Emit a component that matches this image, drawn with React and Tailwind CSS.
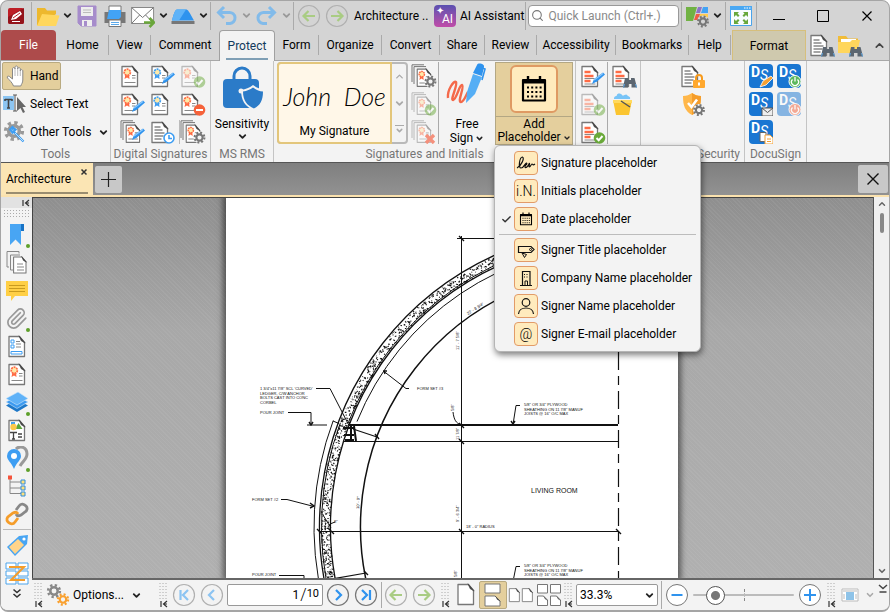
import React, { useState } from 'react';
import { Check, ChevronDown, ChevronUp, Paperclip, Search } from 'lucide-react';

const Svg = ({ w = 24, h = 24, children }) => (
  <svg width={w} height={h} viewBox={`0 0 ${w} ${h}`} fill="none" className="shrink-0">
    {children}
  </svg>
);

const Caret = ({ color = '#222', size = 11 }) => (
  <ChevronDown size={size} color={color} strokeWidth={4} className="shrink-0" />
);

const Gear = ({ x, y, r = 5, color = '#777' }) => (
  <g transform={`translate(${x} ${y})`} fill="none" stroke={color}>
    <circle r={r * 0.62} strokeWidth={r * 0.42} />
    <circle
      r={r * 0.98}
      strokeWidth={r * 0.42}
      strokeDasharray={`${(r * 0.98 * Math.PI) / 8} ${(r * 0.98 * Math.PI) / 8}`}
    />
  </g>
);

const Page = ({ x = 0, y = 0, s = 1, stroke = '#777' }) => (
  <g transform={`translate(${x} ${y}) scale(${s})`}>
    <path d="M2 2.5h10.5l5 6v14H2z" fill="#fff" stroke={stroke} strokeWidth="1.3" strokeLinejoin="round" />
    <path d="M12 1.8l6.2 7.2-4-2.2z" fill="#444" stroke="#444" strokeWidth=".6" />
  </g>
);

const Rosette = ({ color = '#ff6b45', x = 0, y = 0 }) => (
  <g transform={`translate(${x} ${y})`}>
    <path d="M5.5 10L4.5 15l2.5-1.5L9.5 15 9 10z" fill={color} />
    <circle cx="7.3" cy="8.3" r="3.1" fill="#ffe9a8" stroke={color} strokeWidth="1.7" strokeDasharray="2 .7" />
    <path d="M12 11.5h3.5M12 14h3.5M4.5 18.5h11" stroke="#888" strokeWidth="1.2" />
  </g>
);

const Pen = () => (
  <g>
    <path d="M12 20l2-5 9-6.5 2 2-8 7z" fill="#2f93ee" />
    <path d="M14 16l9-6.5" stroke="#8cc8fb" strokeWidth="1.2" />
  </g>
);

const Badge = ({ kind }) => {
  const fill = { ok: '#6aaa3a', minus: '#f5623a' }[kind];
  return (
    <g>
      <circle cx="19.5" cy="18" r="5.8" fill={fill} />
      <path
        d={kind === 'ok' ? 'M16.5 18l2.2 2.3 3.8-4.3' : 'M16 18h7'}
        stroke="#fff"
        strokeWidth="2"
      />
    </g>
  );
};

const TextLines = ({ color = '#888' }) => (
  <path d="M4.5 7h6M4.5 10h8M4.5 13h10M4.5 16h9M4.5 19h7" stroke={color} strokeWidth="1.3" />
);

const RedLines = () => (
  <g>
    <path d="M4.5 8h6M4.5 12h9M4.5 17h6" stroke="#ff6b45" strokeWidth="2.5" />
    <path d="M4.5 14.5h10M4.5 20h11" stroke="#888" strokeWidth="1" />
  </g>
);

const Binoculars = () => (
  <g fill="#5c6670">
    <path d="M14 14h3.5v2h2.5v-2h3.5l2.5 9.5h-5.5V20h-3.5v3.5H12z" />
    <path d="M13.5 20l-1 3.5M24.5 20l1 3.5" stroke="#5ba3e0" />
  </g>
);

// Certificate sheet used through the signature groups
const DocIcon = ({ seal, stack, faded, extra, lines, red, pageColor, children }) => (
  <Svg w={26}>
    <g opacity={faded ? 0.45 : 1}>
      {stack && <path d="M1 18V.8h12M3 20V2.6h12" stroke="#777" />}
      <g transform={stack ? 'translate(4.5 3) scale(.86)' : undefined}>
        <Page stroke={pageColor} />
        {seal && <Rosette color={seal} />}
        {lines && <TextLines />}
        {red && <RedLines />}
      </g>
    </g>
    {extra === 'pen' && <Pen />}
    {(extra === 'ok' || extra === 'minus') && (
      <g opacity={faded ? 0.5 : 1}><Badge kind={extra} /></g>
    )}
    {extra === 'gear' && <g><circle cx="19.5" cy="17.5" r="6" fill="#f3f3f3" /><Gear x={19.5} y={17.5} /></g>}
    {extra === 'find' && <Binoculars />}
    {extra === 'cross' && <path d="M15 15l8 8M23 15l-8 8" stroke="#f4907c" strokeWidth="3.4" />}
    {extra === 'clock' && (
      <g stroke="#3d9df2" strokeWidth="1.6">
        <circle cx="19" cy="18" r="5" fill="#fff" />
        <path d="M19 15v3.5h3" />
      </g>
    )}
    {children}
  </Svg>
);

const IconButton = ({ label, children, className = '' }) => (
  <button type="button" aria-label={label} className={`flex shrink-0 items-center justify-center ${className}`}>
    {children}
  </button>
);

const Divider = ({ className = 'h-7' }) => <span className={`w-px shrink-0 bg-[#aaaaaa] ${className}`} />;

const ArrowCircle = ({ label, d, color, ring = '#b0b0b0', className = 'w-7' }) => (
  <IconButton label={label} className={className}>
    <Svg>
      <circle cx="12" cy="12" r="10.5" stroke={ring} strokeWidth="1.2" />
      <path d={d} stroke={color} strokeWidth="2.2" />
    </Svg>
  </IconButton>
);

const LEFT = 'M18 12H7M11.5 7L6.5 12l5 5';
const RIGHT = 'M6 12h11M12.5 7l5 5-5 5';

const TitleBar = () => (
  <header className="flex h-[29px] shrink-0 items-center whitespace-nowrap">
    <span className="flex w-[30px] justify-center">
      <Svg w={18} h={18}>
        <rect x="1" y="1" width="16" height="16" rx="2" fill="#bd1e26" />
        <path d="M1 10L17 1v14a2 2 0 0 1-2 2H3a2 2 0 0 1-2-2z" fill="#94141b" />
        <path d="M4 13l2-5 7-4 2 3-6 5z" fill="#fff" />
        <path d="M6 11l7-5" stroke="#bd1e26" />
        <path d="M5 14.5h8" stroke="#fff" />
      </Svg>
    </span>
    <Divider />
    <IconButton label="Open" className="ml-1 gap-[2px]">
      <Svg>
        <path d="M1 4h8l2 2.5h9V10L4 22 1 21z" fill="#edb82e" />
        <path d="M6 10l17.5 1.5L20 22H1z" fill="#ffd75e" />
      </Svg>
      <Caret />
    </IconButton>
    <IconButton label="Save" className="w-7">
      <Svg>
        <path d="M3 2h18v20H6l-3-3z" fill="#a68ccb" stroke="#a68ccb" strokeLinejoin="round" />
        <path d="M6 3h12v9H6z" fill="#eee" />
        <path d="M8 6h8M8 8.5h8" stroke="#bbb" />
        <path d="M7 16h10v6H7z" fill="#eee" />
        <path d="M9 17h3v5H9z" fill="#a68ccb" />
      </Svg>
    </IconButton>
    <IconButton label="Print" className="w-7">
      <Svg>
        <path d="M6 2h12v7H6z" fill="#fff" stroke="#777" />
        <path d="M1.5 8h21v11h-21z" fill="#777" />
        <path d="M6 6h12v7l-2 2H4z" fill="#42a3f5" />
        <path d="M6 16h12v6.5H6z" fill="#fff" stroke="#777" />
        <path d="M8 18.5h8M8 20.5h8" stroke="#5ba9ea" />
      </Svg>
    </IconButton>
    <IconButton label="Email" className="ml-[2px] gap-[3px]">
      <Svg>
        <path d="M.6 3.5h22v16h-22z" fill="#fff" stroke="#888" />
        <path d="M.6 3.5l11 10 11-10M.6 19.5l8-8.5M22.6 19.5l-8-8.5" stroke="#777" />
        <path d="M13 18.5h9M18.5 14l4.5 4.5-4.5 4.5" stroke="#69a63a" strokeWidth="2.5" />
      </Svg>
      <Caret />
    </IconButton>
    <IconButton label="Scan" className="ml-[2px] gap-[3px]">
      <Svg>
        <path d="M6 5.5h9c2 0 3 2 8 11H1C2 12 4 5.5 6 5.5z" fill="#2e93ee" />
        <path d="M6 5.5h9L8 16.5H1C2 12 4 5.5 6 5.5z" fill="#5fb3f8" />
        <path d="M.5 17h23v3H.5z" fill="#777" />
      </Svg>
      <Caret />
    </IconButton>
    <Divider className="ml-px h-7" />
    <IconButton label="Undo" className="ml-1">
      <Svg>
        <path d="M9 3L3.5 8.5 9 14M4 8.500h10a5 5 0 0 1 1 11h-4" stroke="#82bbea" strokeWidth="3" />
      </Svg>
    </IconButton>
    <IconButton label="Undo list" className="ml-px w-3"><Caret color="#999" /></IconButton>
    <IconButton label="Redo" className="ml-[2px]">
      <Svg>
        <path d="M15 3l5.5 5.5L15 14M20 8.5H10a5 5 0 0 0-1 11h4" stroke="#82bbea" strokeWidth="3" />
      </Svg>
    </IconButton>
    <IconButton label="Redo list" className="ml-[2px] w-3"><Caret color="#999" /></IconButton>
    <Divider className="ml-px h-7" />
    <ArrowCircle label="Back" d={LEFT} color="#a9cc83" className="ml-px w-7" />
    <ArrowCircle label="Forward" d={RIGHT} color="#a9cc83" />
    <span className="ml-[3px] w-[80px]">Architecture ..</span>
    <button type="button" className="flex items-center gap-[4px]">
      <span className="relative flex h-[22px] w-[22px] items-end justify-end rounded-sm bg-gradient-to-b from-[#5a4fb0] to-[#c04aa8] px-[3px] text-[12px] leading-4 text-white">
        AI
        <span className="absolute left-[2px] top-0 text-[10px] leading-[12px]">✦</span>
      </span>
      AI Assistant
    </button>
    <Divider className="ml-px h-7" />
    <label className="mx-[2px] flex h-[22px] min-w-0 flex-1 items-center rounded-sm border border-[#999999] bg-white pl-[2px]">
      <Search size={13} color="#777" className="shrink-0" />
      <input
        type="text"
        aria-label="Quick Launch"
        placeholder="Quick Launch (Ctrl+.)"
        className="ml-1 w-full min-w-0 bg-transparent outline-none placeholder:text-[#8a8a8a]"
      />
    </label>
    <Divider />
    <IconButton label="Theme" className="ml-[3px] gap-[3px]">
      <Svg>
        <path d="M1 3h11L8 17H1z" fill="#71b244" />
        <path d="M13 3h4l-2 6h-4z" fill="#8d73c8" />
        <path d="M18 3h5v6h-7z" fill="#42a3f5" />
        <path d="M11 10h4l-2 6h-4z" fill="#ef5d44" />
        <path d="M15 10h8v6h-8z" fill="#ffcc4d" />
        <circle cx="18" cy="17.5" r="6" fill="#d4d4d4" />
        <Gear x={18} y={17.5} />
      </Svg>
      <Caret />
    </IconButton>
    <Divider className="ml-[2px] h-7" />
    <IconButton label="Full screen" className="w-[30px]">
      <Svg>
        <path d="M1.5 2.5h21v19h-21z" fill="#f8fcff" stroke="#4aa3ea" />
        <path d="M1 2h22v4H1z" fill="#4aa8f3" />
        <path d="M15 4h1.5M17.5 4H19M20 4h1.5" stroke="#fff" />
        <g fill="#68a83c">
          <path d="M5 8h5L8.5 9.5l2 2-1.5 1.5-2-2L5 13z" />
          <path d="M19 8h-5l1.5 1.5-2 2L15 13l2-2 2 2z" />
          <path d="M5 20h5l-1.5-1.5 2-2L9 15l-2 2-2-2z" />
          <path d="M19 20h-5l1.5-1.5-2-2L15 15l2 2 2-2z" />
        </g>
      </Svg>
    </IconButton>
    <Divider />
    <IconButton label="Minimize" className="w-11">
      <Svg w={14} h={14}><path d="M1 10.5h12" stroke="#000" /></Svg>
    </IconButton>
    <IconButton label="Maximize" className="w-11">
      <Svg w={14} h={14}><path d="M1.5 1.5h11v11h-11z" stroke="#000" /></Svg>
    </IconButton>
    <IconButton label="Close" className="w-11">
      <Svg w={14} h={14}><path d="M2.5 2.5l9 9M11.5 2.5l-9 9" stroke="#000" strokeWidth="1.2" /></Svg>
    </IconButton>
  </header>
);

const TABS = [
  { name: 'Home', width: 'w-[52px]' },
  { name: 'View', width: 'w-[42px]' },
  { name: 'Comment', width: 'w-[68px]', last: true },
  { name: 'Protect', width: 'w-[56px]', active: true },
  { name: 'Form', width: 'w-[44px]' },
  { name: 'Organize', width: 'w-[63px]' },
  { name: 'Convert', width: 'w-[58px]' },
  { name: 'Share', width: 'w-[45px]' },
  { name: 'Review', width: 'w-[52px]' },
  { name: 'Accessibility', width: 'w-[79px]' },
  { name: 'Bookmarks', width: 'w-[73px]' },
  { name: 'Help', width: 'w-[42px]' },
];

const RibbonTabs = () => (
  <nav className="flex h-[31px] shrink-0 items-end border-b border-[#a8a8a8]">
    <button type="button" className="mr-px h-[30px] w-[55px] rounded-t bg-[#ad4b4b] text-white">File</button>
    {TABS.map((tab) =>
      tab.active ? (
        <button
          key={tab.name}
          type="button"
          className={`relative -mb-px h-[31px] ${tab.width} rounded-t border border-b-0 border-[#a0a0a0] bg-[#f3f3f3] text-[#123a5c]`}
        >
          {tab.name}
          <span className="absolute inset-x-[6px] bottom-[1px] h-[2px] bg-[#7f9fb5]" />
        </button>
      ) : (
        <button key={tab.name} type="button" className={`flex h-[30px] items-center ${tab.width}`}>
          <span className="flex-1">{tab.name}</span>
          {!tab.last && <Divider className="h-5" />}
        </button>
      )
    )}
    <button type="button" className="ml-px h-[30px] w-[74px] border-x border-t border-[#d6bf7c] bg-[#cfc9ae]">
      Format
    </button>
    <div className="flex h-[30px] flex-1 items-center pl-[3px]">
      <IconButton label="Find text"><DocIcon lines extra="find" /></IconButton>
      <IconButton label="Search folder" className="ml-[2px]">
        <Svg w={26}>
          <path d="M1 3h8l2 2.5h10V20H1z" fill="#f1bc38" />
          <path d="M4 6h15v5H4z" fill="#fff" />
          <path d="M1 9h12l2-2h8l-3 13H1z" fill="#ffd65c" />
          <Binoculars />
        </Svg>
      </IconButton>
      <IconButton label="Collapse ribbon" className="ml-auto mr-[3px]">
        <ChevronUp size={13} strokeWidth={3} color="#444" />
      </IconButton>
    </div>
  </nav>
);

const Group = ({ title, className = '', labelClass = 'text-center', children }) => (
  <section className={`flex shrink-0 flex-col border-r border-[#c4c4c4] ${className}`}>
    <div className="flex h-[86px] pt-px">{children}</div>
    <h2 className={`leading-[14px] text-[#767676] ${labelClass}`}>{title}</h2>
  </section>
);

const CalendarIcon = ({ size }) => (
  <svg width={size} height={size} viewBox="0 0 28 28" fill="none">
    <path d="M3 5h22v20.5H3z" stroke="#000" strokeWidth="2.2" strokeLinejoin="round" />
    <path d="M3 4.5h22v4H3z" fill="#000" />
    <path d="M8 1v6M20 1v6" stroke="#000" strokeWidth="2.4" />
    <path d="M7 12.5h15M7 17h15M7 21.5h15" stroke="#000" strokeWidth="2" strokeDasharray="2 2.2" />
  </svg>
);

const MENU_ITEMS = [
  {
    name: 'Signature placeholder',
    icon: (
      <Svg w={20} h={20}>
        <path
          d="M1 15C5 13 9 5 6.500 4 3.500 4 2 15 5 15s4-5 5.500-5c1.500 1-2 2.500-1.500 4s3 0 4.500-4c0 3-1 4 0 4s1.500-3 2.500-3 .500 2 3 0"
          stroke="#111"
          strokeWidth="1.2"
        />
      </Svg>
    ),
  },
  { name: 'Initials placeholder', icon: <span className="text-[14px] font-light leading-5">i.N.</span> },
  { name: 'Date placeholder', checked: true, icon: <CalendarIcon size={14} /> },
  {
    name: 'Signer Title placeholder',
    divider: true,
    icon: (
      <Svg w={20} h={20}>
        <path d="M2.5 6.500h12.500l3 3-3 3H2.500z" stroke="#111" strokeWidth="1.200" />
        <circle cx="14.5" cy="9.500" r="1" stroke="#111" />
        <path d="M6 13l4.500 1.500-2 3z" stroke="#111" />
      </Svg>
    ),
  },
  {
    name: 'Company Name placeholder',
    icon: (
      <Svg w={20} h={20}>
        <path d="M6.5 17V3.500h7.500V17M4 17.500h12" stroke="#111" strokeWidth="1.200" />
        <path d="M8 6.500h5M8 9h5" stroke="#111" strokeDasharray="1 1.500" strokeWidth="1.200" />
        <path d="M9 17v-4h2.500v4" stroke="#111" />
      </Svg>
    ),
  },
  {
    name: 'Signer Name placeholder',
    icon: (
      <Svg w={20} h={20}>
        <circle cx="10" cy="6.5" r="3.8" stroke="#111" strokeWidth="1.2" />
        <path d="M2.5 18c.5-8 14.500-8 15 0" stroke="#111" strokeWidth="1.2" />
      </Svg>
    ),
  },
  { name: 'Signer E-mail placeholder', icon: <span className="text-[14px] font-light leading-5">@</span> },
];

const PlaceholderMenu = () => (
  <div
    role="menu"
    className="absolute -left-px top-[83px] z-20 w-[207px] rounded-md border border-[#b5b5b5] bg-[#f3f3f3] py-[3px] shadow-[1px_3px_6px_rgba(0,0,0,0.5)]"
  >
    {MENU_ITEMS.map((item) => (
      <React.Fragment key={item.name}>
        {item.divider && <div className="mx-1 my-[1px] h-px bg-[#bcbcbc]" />}
        <button type="button" role="menuitem" className="flex h-7 w-full items-center text-left">
          <span className="flex w-[19px] justify-center pl-[4px]">
            {item.checked && <Check size={11} strokeWidth={3} color="#333" />}
          </span>
          <span className="flex h-6 w-6 items-center justify-center rounded-sm border border-[#e29b68] bg-[#ffebbd]">
            {item.icon}
          </span>
          <span className="ml-[3px]">{item.name}</span>
        </button>
      </React.Fragment>
    ))}
  </div>
);

const DocuSign = ({ label, faded, children }) => (
  <IconButton label={label}>
    <span className={`relative block h-6 w-6 rounded-sm bg-[#1976d2] ${faded ? 'opacity-50' : ''}`}>
      <span className="absolute left-[2px] top-0 text-[14px] font-bold leading-[16px] text-white">D</span>
      <span className="absolute left-[11px] top-[3px] text-[14px] italic leading-[16px] text-white">S</span>
      <span className="absolute inset-0"><Svg>{children}</Svg></span>
    </span>
  </IconButton>
);

const Ribbon = () => (
  <div className="relative z-10 flex h-[101px] shrink-0 whitespace-nowrap bg-[#f3f3f3]">
    <Group title="Tools" className="w-[110px]">
      <div className="flex flex-col items-start pl-px">
        <button type="button" className="flex h-7 items-center rounded-xs border border-[#b9aa80] bg-[#e4cf9d] pl-[2px] pr-[2px]">
          <Svg w={25} h={25}>
            <path
              d="M8.5 22c-1-3-4-6-6-8-1-2 1-2.5 2.5-1l2.5 2V5c0-2 2.5-2 2.5 0V3.500c0-2 2.700-2 2.700 0V5c0-2 2.600-1.800 2.600 0v2c0-2 2.500-1.700 2.500 0v9c0 3-1.500 4-2 6z"
              fill="#fff"
              stroke="#888"
            />
            <path d="M10 5v7M12.7 5v7M15.3 7v5" stroke="#aaa" strokeWidth=".8" />
          </Svg>
          Hand
        </button>
        <button type="button" className="flex h-7 items-center gap-[3px]">
          <Svg w={25}>
            <path d="M1 4h11v14H1z" fill="#8dc6f3" />
            <path d="M3 7.5h7M6.5 7v9M5 16h3M3 7v2M10 7v2" stroke="#444" strokeWidth="1.6" />
            <path d="M11 3h4M13 3v16M11 19h4" stroke="#555" />
            <path d="M15 5v14l3.5-3 2.5 5 2-1-2.5-5H24z" fill="#666" />
          </Svg>
          Select Text
        </button>
        <button type="button" className="flex h-7 items-center gap-[3px]">
          <Svg w={25}>
            <Gear x={12} y={11} r={8.5} color="#999" />
            <path d="M9 7l2.5 2.5M7.5 8.500l3 4 3-3-4-3M11.500 11.500l10 10" stroke="#3d9df2" strokeWidth="2.2" />
            <path d="M13 13l8 8" stroke="#bfe1fb" strokeWidth="1" />
          </Svg>
          Other Tools
          <span className="ml-1"><Caret /></span>
        </button>
      </div>
    </Group>

    <Group title="Digital Signatures" className="w-[100px]">
      <div className="grid auto-rows-[28px] grid-cols-3 items-center gap-x-[3px] pl-2">
        <IconButton label="Sign document"><DocIcon seal="#ff6b45" /></IconButton>
        <IconButton label="Certify document"><DocIcon seal="#3d9df2" extra="pen" /></IconButton>
        <IconButton label="Validate all"><DocIcon seal="#ff6b45" faded extra="ok" /></IconButton>
        <IconButton label="Place signature"><DocIcon seal="#ff6b45" extra="pen" /></IconButton>
        <IconButton label="Certify"><DocIcon seal="#3d9df2" /></IconButton>
        <IconButton label="Clear signature"><DocIcon seal="#ff6b45" extra="minus" /></IconButton>
        <IconButton label="Sign multiple"><DocIcon stack seal="#ff6b45" extra="pen" /></IconButton>
        <IconButton label="Timestamp"><DocIcon lines extra="clock" /></IconButton>
        <IconButton label="Signature settings" className="border-l border-[#bbbbbb]"><DocIcon stack seal="#ff6b45" extra="gear" /></IconButton>
      </div>
    </Group>

    <Group title="MS RMS" className="w-[63px]">
      <button type="button" className="flex flex-1 flex-col items-center">
        <Svg w={44} h={50}>
          <path d="M14 20v-6a8 8 0 0 1 16 0v6" stroke="#2b7bc8" strokeWidth="3" />
          <rect x="3" y="17" width="36" height="29" rx="4" fill="#2b7bc8" />
          <path d="M21 28c5-1 8-2 12-5 4 3 7 4 12 5 1 10-3 17-11 20-9-3-13-10-13-20z" fill="#f3f3f3" />
          <circle cx="21" cy="29" r="2.500" fill="#f3f3f3" />
          <path d="M23 29.5c4-.5 7-2 10-4 3 2 6 3.500 10 4 0 9-3 14-9 17-7-3-11-8-11-17z" fill="#2b7bc8" />
        </Svg>
        <span className="mt-[5px] leading-[14px]">Sensitivity</span>
        <Caret />
      </button>
    </Group>

    <Group title="Signatures and Initials" className="w-[302px]">
      <div className="ml-[3px] flex h-[82px] rounded-sm border-2 border-[#b9b9b9]">
        <button
          type="button"
          className="-my-[2px] -ml-[2px] flex w-[115px] flex-col items-center rounded-l-sm border-2 border-[#e3c67b] bg-[#fff7e8]"
        >
          <span className="pt-4 font-[Lato] text-[25px] font-light italic leading-8">John&nbsp; Doe</span>
          <span className="mt-auto pb-[3px] leading-4">My Signature</span>
        </button>
        <div className="flex w-[14px] flex-col items-center justify-between py-[7px]">
          <ChevronUp size={11} strokeWidth={3} color="#aaa" />
          <Caret color="#aaa" />
          <span className="border-t border-[#aaaaaa]"><Caret color="#aaa" size={9} /></span>
        </div>
      </div>
      <div className="ml-[2px] flex w-7 flex-col">
        <IconButton label="Manage signatures" className="h-7"><DocIcon stack seal="#ff6b45" extra="gear" /></IconButton>
        <IconButton label="Apply signatures" className="h-7"><DocIcon stack faded seal="#ff6b45" extra="ok" /></IconButton>
        <IconButton label="Remove signatures" className="h-7"><DocIcon stack faded seal="#ff6b45" extra="cross" /></IconButton>
      </div>
      <Divider className="h-[82px]" />
      <button type="button" className="flex w-[56px] flex-col items-center">
        <Svg w={46} h={48}>
          <path
            d="M4 36c-1-8 6-18 8-16 2 3-6 18-3 18 4-1 6-15 9-15 3 1-5 17-1 17 3 0 5-7 7-10"
            stroke="#f4694a"
            strokeWidth="2.4"
          />
          <path d="M23 30L29 12l9 3-7 17-9 9z" fill="#55aef5" />
          <path d="M29 11l4-8c1-3 8-1 7 2l-2 9z" fill="#2f93ee" />
          <path d="M38 6l3 1-3 11" stroke="#2f93ee" strokeWidth="1.6" />
        </Svg>
        <span className="mt-[7px] leading-[14px]">Free</span>
        <span className="flex items-center gap-[2px] leading-[14px]">Sign <Caret size={9} /></span>
      </button>
      <div className="relative h-[83px] w-[78px] shrink-0">
        <button type="button" aria-haspopup="menu" className="flex h-full w-full flex-col items-center border border-[#b3a784] bg-[#e4cf9d]">
          <span className="flex w-full justify-center border-b border-[#b3a784] pb-[3px] pt-[2px]">
            <span className="flex h-12 w-12 items-center justify-center rounded-md border-2 border-[#df9a63] bg-[#ffebbd]">
              <CalendarIcon size={28} />
            </span>
          </span>
          <span className="mt-px leading-[13px]">Add</span>
          <span className="flex items-center gap-[2px] leading-[13px]">Placeholder <Caret size={8} /></span>
        </button>
        <PlaceholderMenu />
      </div>
    </Group>

    <Group title="" className="w-[65px]">
      <div className="flex flex-col pl-1">
        <IconButton label="Mark for redaction" className="h-7"><DocIcon red extra="pen" /></IconButton>
        <IconButton label="Apply redaction" className="h-7"><DocIcon red faded extra="ok" /></IconButton>
        <IconButton label="Apply all" className="h-7"><DocIcon red extra="ok" /></IconButton>
      </div>
      <Divider className="ml-px h-[82px]" />
      <div className="flex flex-col pl-[3px]">
        <IconButton label="Search and redact" className="h-7"><DocIcon red extra="find" /></IconButton>
        <IconButton label="Sanitize document" className="h-7">
          <Svg w={26}>
            <path d="M2 8h19l-3 15H5z" fill="#fbc530" />
            <path d="M2 8h19v3H2z" fill="#ffd95e" />
            <path d="M3 7c0-4 3-2 3-4s4-2 5 0 4-2 5 0 4 1 3 4z" fill="#78c4f7" />
            <path d="M10 9l9 6" stroke="#555" strokeWidth="1.5" />
          </Svg>
        </IconButton>
      </div>
    </Group>

    <Group title="Security" labelClass="pr-1 text-right" className="w-[104px]">
      <div className="flex flex-1 flex-col items-center">
        <IconButton label="Security properties" className="h-7">
          <DocIcon lines>
            <path d="M16 16v-2a3 3 0 0 1 6 0v3" stroke="#f79a1c" strokeWidth="2" />
            <rect x="13" y="16" width="12" height="8" rx="1" fill="#ffa82e" />
            <path d="M19 18.5v3" stroke="#fff" strokeWidth="2" />
          </DocIcon>
        </IconButton>
        <IconButton label="Security policies" className="h-7">
          <Svg w={26}>
            <path d="M3 4c4 0 6-1 9-3 3 2 5 3 9 3 0 10-2 15-9 19C5 19 3 14 3 4z" fill="#ffb74a" />
            <path d="M12 1c3 2 5 3 9 3 0 10-2 15-9 19z" fill="#f59d2a" />
            <path d="M8 11l3.5 4L17 7.5" stroke="#fff" strokeWidth="2.5" />
            <circle cx="19" cy="18" r="6" fill="#f3f3f3" />
            <Gear x={19} y={18} />
          </Svg>
        </IconButton>
      </div>
    </Group>

    <Group title="DocuSign" className="w-[62px]">
      <div className="grid auto-rows-[28px] grid-cols-2 items-center gap-x-1 pl-1">
        <DocuSign label="Sign with DocuSign"><path d="M11 23l3-6 8-5 2 2-7 7z" fill="#f5a033" stroke="#fff" strokeWidth=".8" /></DocuSign>
        <DocuSign label="Log in">
          <circle cx="18" cy="17.5" r="6" fill="#5cb85c" stroke="#fff" />
          <path d="M15.5 15.500a3.500 3.500 0 1 0 5 0M18 13v4.500" stroke="#fff" strokeWidth="1.3" />
        </DocuSign>
        <DocuSign label="Send">
          <path d="M13 16h11v8H13z" fill="#eee" stroke="#555" />
          <path d="M13 16l5.5 4.5L24 16" stroke="#555" />
        </DocuSign>
        <DocuSign label="Log out" faded>
          <circle cx="18" cy="17.5" r="6" fill="#f5623a" stroke="#fff" />
          <path d="M15.5 15.500a3.500 3.500 0 1 0 5 0M18 13v4.500" stroke="#fff" strokeWidth="1.3" />
        </DocuSign>
        <DocuSign label="Documents">
          <path d="M11 12.5h6v9h-6z" fill="#fff" stroke="#666" />
          <path d="M16 15h5l3 3v6h-8z" fill="#fff" stroke="#f5a033" />
          <path d="M18 19h4M18 21.5h4" stroke="#f5a033" />
        </DocuSign>
      </div>
    </Group>
  </div>
);

const DocumentTabs = () => (
  <div className="flex h-[35px] shrink-0 items-start border-b-2 border-t border-b-[#fbe2ae] border-t-[#555555] bg-gradient-to-b from-[#7f7f7f] to-[#929292]">
    <div className="relative flex h-8 w-[92px] items-center bg-[#fbe5b4] pl-[5px]">
      <a href="#architecture">Architecture</a>
      <button type="button" aria-label="Close tab" className="absolute right-[5px] top-[5px]">
        <Svg w={8} h={8}><path d="M1.5 1.5l5 5M6.5 1.5l-5 5" stroke="#333" strokeWidth="1.5" /></Svg>
      </button>
      <span className="absolute inset-x-[5px] bottom-px h-[2px] bg-[#9a8d70]" />
    </div>
    <IconButton label="New tab" className="ml-[2px] mt-[3px] h-[27px] w-[27px] rounded-xs bg-[#c8c8c8]">
      <Svg w={17} h={17}><path d="M8.5 1v15M1 8.500h15" stroke="#222" strokeWidth="1.2" /></Svg>
    </IconButton>
    <IconButton label="Close document" className="ml-auto mr-px mt-[2px] h-[28px] w-[30px] rounded-xs bg-[#c8c8c8]">
      <Svg w={14} h={14}><path d="M1.5 1.5l11 11M12.5 1.5l-11 11" stroke="#111" strokeWidth="1.4" /></Svg>
    </IconButton>
  </div>
);

const Grip = () => (
  <Svg w={10} h={18}>
    <path d="M1 1v17M4 1v17M7 1v17" stroke="#aaa" strokeWidth="1" strokeDasharray="1 2" />
  </Svg>
);

const Collapse = () => (
  <Svg w={8} h={8}><path d="M1 1v6M7 1L3.5 4 7 7M3 4h4" stroke="#333" strokeWidth="1.2" /></Svg>
);

const SIDE_ITEMS = [
  {
    name: 'Bookmarks',
    dot: true,
    icon: (
      <>
        <path d="M5 2h14v7h-3v14l-5.5-5.5L5 23z" fill="#48a5f3" />
        <path d="M16 2h3v7h-3z" fill="#1873c5" />
      </>
    ),
  },
  {
    name: 'Thumbnails',
    icon: (
      <>
        <path d="M4 17H2V1.5h12v2M8 20H5.5V5H15" stroke="#888" />
        <Page x={7} y={5} s={0.8} />
        <path d="M12 14h6M12 17h7M12 20h7" stroke="#888" />
      </>
    ),
  },
  {
    name: 'Comments',
    icon: (
      <>
        <path d="M1 3h22v15H10l-4 5v-5H1z" fill="#ffcf45" />
        <path d="M4 7.5h16M4 10.5h16M4 13.5h16" stroke="#c99b1e" />
      </>
    ),
  },
  { name: 'Attachments', dot: true, clip: true },
  {
    name: 'Fields',
    icon: (
      <>
        <Page x={2} />
        <path d="M6 6h3v3H6zM6 11h3v3H6zM6 17.5h11v2.5H6z" stroke="#3d9df2" />
        <path d="M11 7.5h4M11 10h5M11 13h5" stroke="#888" />
      </>
    ),
  },
  { name: 'Signatures', icon: <><Page x={2} /><Rosette x={2} /></> },
  {
    name: 'Layers',
    dot: true,
    icon: (
      <>
        <path d="M1 15.5l11 6.5 11-6.5-11-6z" fill="#1e78c8" />
        <path d="M1 12l11 6.5L23 12l-11-6z" fill="#3b9af0" stroke="#cfe6fa" strokeWidth=".6" />
        <path d="M1 8.5L12 15l11-6.5L13 2z" fill="#5fb2f8" stroke="#cfe6fa" strokeWidth=".6" />
      </>
    ),
  },
  {
    name: 'Content',
    icon: (
      <>
        <Page x={2} />
        <path d="M6 4h4v5H6z" fill="#42a3f5" />
        <path d="M10 11l3.5-6 4 6z" fill="#5ea63a" />
        <circle cx="8.5" cy="9" r="3.2" fill="#ffc94a" />
        <path d="M5 14.5h7M8.5 14v7M7 21h3M13 16h4M13 19h4" stroke="#444" strokeWidth="1.3" />
      </>
    ),
  },
  {
    name: 'Destinations',
    dot: true,
    icon: (
      <>
        <path d="M11 3c4-4 11-2 11 5 0 5-4 7-7 12" stroke="#999" strokeWidth="3" />
        <path d="M9 23C6 16 2 14 2 10a7 7 0 0 1 14 0c0 4-4 6-7 13z" fill="#3d9df2" />
        <circle cx="9" cy="10" r="3" fill="#fff" />
      </>
    ),
  },
  {
    name: 'Structure',
    icon: (
      <>
        <path d="M5 4v15.5h11M5 8h11M5 14h11" stroke="#888" />
        <path d="M3 1.5h4v4H3z" fill="#f5533a" />
        <path d="M16 6h4v4h-4zM16 12h4v4h-4zM16 18h4v4h-4z" fill="#ffe07a" stroke="#2f8de0" />
      </>
    ),
  },
  {
    name: 'Links',
    icon: (
      <>
        <path d="M11 8l3-4c2-3 5-2 7 0s1 5-1 6l-4 3c-2 1-4 1-5-1" stroke="#888" strokeWidth="2.8" />
        <path d="M13 16l-3 4c-2 3-5 2-7 0s-1-5 1-6l4-3c2-1 4-1 5 1" stroke="#f59d2a" strokeWidth="2.8" />
      </>
    ),
  },
  {
    name: 'Tags',
    divider: true,
    icon: (
      <>
        <path d="M2 14L14 3l9-1-1 9-12 12z" fill="#48a5f3" />
        <path d="M4 14l9-8 6 6-9 9z" fill="#ffd48a" />
        <circle cx="19" cy="6" r="1.6" fill="#fff" />
      </>
    ),
  },
  {
    name: 'Order',
    icon: (
      <>
        <path d="M1 2h10v6H1zM13 2h10v6H13zM1 10h10v5H1zM13 10h10v5H13zM1 17h10v6H1zM13 17h10v6H13z" fill="#fff" stroke="#4aa3ea" />
        <path d="M4 6h15L6 19h14" stroke="#f59d2a" strokeWidth="2" />
      </>
    ),
  },
];

const Sidebar = () => (
  <aside className="flex w-[31px] shrink-0 flex-col items-center overflow-hidden bg-[#f3f3f3]">
    <div className="flex h-[11px] w-full shrink-0 items-center justify-end bg-[#e2e2e2] pr-[2px]"><Collapse /></div>
    <Svg w={26} h={12}>
      <path d="M0 2.5h26M0 5.5h26M0 8.5h26" stroke="#aaa" strokeDasharray="1 2" />
    </Svg>
    {SIDE_ITEMS.map((item) => (
      <React.Fragment key={item.name}>
        {item.divider && <div className="my-px h-px w-7 shrink-0 bg-[#bbbbbb]" />}
        <IconButton label={item.name} className="relative h-7 w-full">
          {item.clip ? (
            <Paperclip size={23} color="#999" strokeWidth={1.8} />
          ) : (
            <Svg>{item.icon}</Svg>
          )}
          {item.dot && <span className="absolute bottom-0 right-[2px] h-1 w-1 rounded-full bg-[#5ea02a]" />}
        </IconButton>
      </React.Fragment>
    ))}
    <Svg w={12} h={14}><path d="M2.5 2.5L6 5.500l3.500-3M2.500 7L6 10l3.500-3" stroke="#333" strokeWidth="1.6" /></Svg>
  </aside>
);

const CX = 618;
const CY = 527;

const polar = (r, deg) => {
  const a = (deg * Math.PI) / 180;
  return [CX + r * Math.cos(a), CY - r * Math.sin(a)];
};

const arc = (r, from, to) => {
  const [x1, y1] = polar(r, from);
  const [x2, y2] = polar(r, to);
  return `M${x1} ${y1}A${r} ${r} 0 0 0 ${x2} ${y2}`;
};

// Concrete hatch: small marks scattered between the two wall radii
const SPECKLES = (() => {
  let seed = 7;
  const rand = () => {
    seed = (seed * 16807) % 2147483647;
    return seed / 2147483647;
  };
  let d = '';
  for (let i = 0; i < 1150; i += 1) {
    const [x, y] = polar(288.5 + rand() * 9, 90 + rand() * 103);
    d += `M${x.toFixed(1)} ${y.toFixed(1)}l${(rand() * 1.6).toFixed(1)} ${(rand() * 1.8 - 0.6).toFixed(1)}`;
  }
  return d;
})();

const Note = ({ x, y, lines }) => (
  <text x={x} y={y}>
    {lines.map((line, i) => (
      <tspan key={line} x={x} y={y + i * 4.5}>{line}</tspan>
    ))}
  </text>
);

const Drawing = () => (
  <svg width="452" height="382" viewBox="226 198 452 382" className="block shrink-0 bg-white">
    <g stroke="#111" fill="none" strokeWidth="1">
      <path d={arc(298.5, 90, 194)} strokeWidth="1.3" />
      <path d={arc(287.5, 90, 194)} strokeWidth="1.3" />
      <path d={arc(281.5, 90, 158)} />
      <path d={arc(304, 159.5, 194)} />
      <path d={arc(296.5, 159.5, 194)} />
      <path d={arc(289.2, 90, 159)} />
      <path d={arc(257.5, 90, 194)} strokeWidth="1.5" />
      <path d={SPECKLES} strokeWidth="1.1" />
      <path d="M333 421l6 2.5M457 238.5h161M461.5 236v345" />
      <path d="M349 425h269" strokeWidth="2" />
      <path d="M343 441.5h275M319 531.5h299" />
      <path d="M618.5 352v230" strokeWidth="1.2" strokeDasharray="18 6 9 6" />
      <path d="M343 428h12M344 435h10M345 440h9M351 424v18M354 426l2 15" strokeWidth="2" />
      <path d="M353 429l24 8M326 580l40-7" strokeWidth="1.2" />
      <path d="M316 388.5h14l19 37M288 412.5h23v11M307 425h20M281 499.5h6l27 7M409 388.5h-3l-22-17" />
      <path d="M279 575.5h25v6M520 405.5h-4l-3 19M520 566.5h-4l-3 15" />
      <path d="M453 412c1 8 3 11 8 13M330 524l5-2M323 515l8 13" />
      <path
        d="M459 236l5 5M459 423l5 5M459 439l5 5M459 529l5 5M616 529l5 5M317 529l5 5M329 529l5 5M375 434l4 5M364 571l4 4M309 422l2 3 2-3M310 503l4 3-4 2M387 371l-3 0 1 3M511 421l2 3 2-3"
        strokeWidth="1.4"
      />
    </g>
    <g fill="#111" fontFamily="Liberation Sans" fontSize="4">
      <Note x={260} y={390} lines={['1 3/4"x11 7/8" SCL \'CURVED\'', 'LEDGER, C/W ANCHOR', 'BOLTS CAST INTO CONC', 'CORBEL']} />
      <Note x={260} y={414} lines={['POUR JOINT']} />
      <Note x={252} y={501} lines={['FORM SET #2']} />
      <Note x={417} y={390} lines={['FORM SET #3']} />
      <Note x={252} y={576} lines={['POUR JOINT']} />
      <Note x={524} y={406} lines={['5/8" OR 3/4" PLYWOOD', 'SHEATHING ON 11 7/8" MANUF', 'JOISTS @ 16" O/C MAX']} />
      <Note x={524} y={567} lines={['5/8" OR 3/4" PLYWOOD', 'SHEATHING ON 11 7/8" MANUF', 'JOISTS @ 16" O/C MAX']} />
      <Note x={466} y={528} lines={['18\' - 0"  RADIUS']} />
      <text x="334" y="523">8"</text>
      <text transform="translate(459 350) rotate(-90)">11' - 7 5/8"</text>
      <text transform="translate(454 411) rotate(-90)">5/8"</text>
      <text transform="translate(459 440) rotate(-90)">11 7/8"</text>
      <text transform="translate(459 522) rotate(-90)">9' - 6 3/4"</text>
      <text transform="translate(457 577) rotate(-90)">5/8"</text>
      <text transform="translate(359 509) rotate(-86)">10' - 0"</text>
      <text transform="translate(468 315) rotate(-33)">22' - 8 3/4"</text>
      <text x="531" y="493" fontSize="7">LIVING ROOM</text>
    </g>
  </svg>
);

const Canvas = () => (
  <main className="flex min-h-0 flex-1 overflow-hidden border-b-2 border-b-[#666666]">
    <div className="flex min-w-0 flex-1 justify-center overflow-hidden border-l border-t border-[#444444] bg-[repeating-linear-gradient(45deg,rgba(255,255,255,0.05)_0_1px,transparent_1px_3px),linear-gradient(#8f8f8f,#a8a8a8_35%,#b0b0b0)] pr-[2px]">
      <div className="flex shrink-0 shadow-[0_0_6px_3px_rgba(0,0,0,0.5)]">
        <Drawing />
      </div>
    </div>
    <div className="flex w-4 shrink-0 flex-col items-center justify-between border-l border-[#555555] bg-[#f0f0f0] py-[2px]">
      <div className="flex flex-col items-center gap-1">
        <ChevronUp size={10} strokeWidth={3.5} color="#666" />
        <span className="h-5 w-1 rounded-full bg-[#888888]" />
      </div>
      <Caret color="#666" size={10} />
    </div>
  </main>
);

const ToolbarGrip = ({ className = '' }) => (
  <span className={`flex w-[10px] shrink-0 flex-col items-center ${className}`}>
    <Grip />
    <Collapse />
  </span>
);

const StatusBar = () => {
  const [page, setPage] = useState('1');
  const [zoom, setZoom] = useState(16);

  return (
    <footer className="flex h-[30px] shrink-0 items-center pl-[2px]">
      <ToolbarGrip />
      <button type="button" className="ml-[2px] flex items-center gap-[3px] whitespace-nowrap">
        <Svg>
          <Gear x={8} y={8} r={6} color="#888" />
          <Gear x={17} y={16.5} r={5.2} color="#f9a02e" />
        </Svg>
        Options...
        <span className="ml-1"><Caret /></span>
      </button>
      <ToolbarGrip className="ml-[17px]" />
      <ArrowCircle label="First page" d="M8.5 7v10M16 7l-5 5 5 5" color="#8cc4f2" className="ml-px w-7" />
      <ArrowCircle label="Previous page" d="M14 7l-5 5 5 5" color="#8cc4f2" />
      <label className="ml-px flex h-[22px] w-[96px] items-center rounded-xs border border-[#999999] bg-white pr-[3px]">
        <input
          aria-label="Current page"
          type="text"
          value={page}
          onChange={(e) => setPage(e.target.value)}
          className="w-full min-w-0 bg-transparent text-right outline-none"
        />
        <span className="ml-px text-[16px] font-light">/</span>
        <span className="mb-[3px] text-[11px]">10</span>
      </label>
      <ArrowCircle label="Next page" d="M10 7l5 5-5 5" color="#2f93ee" ring="#777" className="ml-px w-7" />
      <ArrowCircle label="Last page" d="M8 7l5 5-5 5M16 7v10" color="#2f93ee" ring="#777" />
      <Divider className="ml-px h-[26px]" />
      <ArrowCircle label="Previous view" d={LEFT} color="#a9cc83" />
      <ArrowCircle label="Next view" d={RIGHT} color="#a9cc83" />
      <ToolbarGrip className="ml-[3px]" />
      <IconButton label="Single page" className="ml-[2px] w-[26px]">
        <Svg w={20}><Page x={0} y={-1} /></Svg>
      </IconButton>
      <IconButton label="Continuous" className="h-[28px] w-[28px] rounded-xs border border-[#b9aa80] bg-[#e4cf9d]">
        <Svg w={20}>
          <path d="M2 1v9h15V1zM2 23V13h10l5 5v5z" fill="#fff" stroke="#777" />
          <path d="M12 12.5l6 6.5-4-2.500z" fill="#444" />
        </Svg>
      </IconButton>
      <IconButton label="Two pages" className="w-7">
        <Svg w={26}>
          <Page x={0} y={4} s={0.65} />
          <Page x={13} y={4} s={0.65} />
        </Svg>
      </IconButton>
      <IconButton label="Two pages continuous" className="w-7">
        <Svg w={26}>
          <path d="M1.5 1.500v8.500h10V1.500zM14.500 1.500v8.500h10V1.500zM1.500 22.500V13h6l4 4v5.500zM14.500 22.500V13h6l4 4v5.500z" fill="#fff" stroke="#777" />
          <path d="M7 12.5l5 5.500-3-2zM20 12.500l5 5.500-3-2z" fill="#444" />
        </Svg>
      </IconButton>
      <ToolbarGrip className="ml-px" />
      <div className="relative ml-[2px]">
        <select
          aria-label="Zoom level"
          defaultValue="33.3%"
          className="h-[22px] w-[82px] appearance-none rounded-xs border border-[#999999] bg-white pl-[3px]"
        >
          <option>33.3%</option>
        </select>
        <span className="pointer-events-none absolute right-[3px] top-[6px]"><Caret /></span>
      </div>
      <Divider className="ml-[3px] h-[28px]" />
      <IconButton label="Zoom out" className="ml-px w-7">
        <Svg>
          <circle cx="12" cy="12" r="10.5" fill="#fff" stroke="#777" />
          <path d="M6.5 12h11" stroke="#2f93ee" strokeWidth="2" />
        </Svg>
      </IconButton>
      <div className="relative ml-[2px] flex h-5 min-w-0 flex-1 items-center">
        <span className="absolute left-1/2 top-[4px] h-3 border-l border-dashed border-[#888888]" />
        <input
          type="range"
          aria-label="Zoom"
          min="0"
          max="100"
          value={zoom}
          onChange={(e) => setZoom(Number(e.target.value))}
          className="relative h-[2px] w-full min-w-0 appearance-none rounded bg-[#bbbbbb] [&::-webkit-slider-thumb]:h-[19px] [&::-webkit-slider-thumb]:w-[19px] [&::-webkit-slider-thumb]:appearance-none [&::-webkit-slider-thumb]:rounded-full [&::-webkit-slider-thumb]:border [&::-webkit-slider-thumb]:border-[#555555] [&::-webkit-slider-thumb]:bg-[radial-gradient(#777_0_4px,#fff_5px)]"
        />
      </div>
      <IconButton label="Zoom in" className="ml-[2px] w-7">
        <Svg>
          <circle cx="12" cy="12" r="10.5" fill="#fff" stroke="#777" />
          <path d="M6 12h12M12 6v12" stroke="#2f93ee" strokeWidth="2" />
        </Svg>
      </IconButton>
      <ToolbarGrip className="ml-[3px]" />
      <IconButton label="Layout" className="ml-1 gap-[6px]">
        <Svg w={18} h={14}>
          <path d="M1 1h16v12H1z" fill="#fff" stroke="#bbb" />
          <path d="M5 4h8v8H5z" fill="#8ec3e8" />
          <path d="M2 3h14M3 6v5M15 6v5" stroke="#bbb" />
        </Svg>
        <Caret color="#aaa" size={10} />
      </IconButton>
      <span className="ml-[3px] flex w-[11px] shrink-0 self-start pt-1">
        <Svg w={10} h={10}><path d="M1 1l4 3.5L9 1M1.5 8h7" stroke="#444" strokeWidth="1.5" /></Svg>
      </span>
    </footer>
  );
};

const App = () => (
  <div className="h-screen min-h-0 bg-white font-[Roboto,sans-serif] text-[12px] leading-4 text-black">
    <div className="flex h-full flex-col overflow-hidden rounded-lg border border-b-2 border-[#a5a5a5] bg-[#d4d4d4]">
      <TitleBar />
      <RibbonTabs />
      <Ribbon />
      <DocumentTabs />
      <div className="flex min-h-0 flex-1 bg-[#f3f3f3]">
        <Sidebar />
        <div className="flex min-w-0 flex-1 flex-col">
          <Canvas />
          <StatusBar />
        </div>
      </div>
    </div>
  </div>
);

export default App;
